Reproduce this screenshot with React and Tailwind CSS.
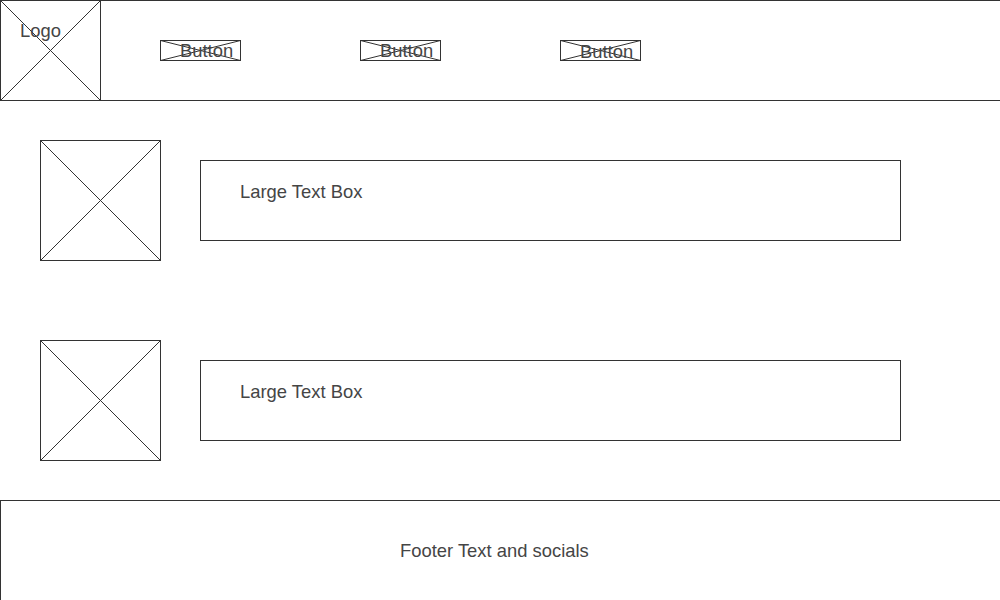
import React from "react";

function Cross({ w, h }) {
  // diagonal lines of a wireframe placeholder
  return (
    <svg
      className="pointer-events-none absolute -inset-px overflow-visible"
      width={w}
      height={h}
      viewBox={`0 0 ${w} ${h}`}
    >
      <line x1="0.5" y1="0.5" x2={w - 0.5} y2={h - 0.5} stroke="#333" strokeWidth="1" />
      <line x1={w - 0.5} y1="0.5" x2="0.5" y2={h - 0.5} stroke="#333" strokeWidth="1" />
    </svg>
  );
}

function NavButton({ className = "" }) {
  return (
    <div className={`relative flex h-[21px] w-[81px] shrink-0 items-center border border-[#333] pl-[19px] ${className}`}>
      <Cross w={81} h={21} />
      <span className="relative whitespace-nowrap leading-[21px]">Button</span>
    </div>
  );
}

function Row() {
  return (
    <div className="flex items-start pl-[40px]">
      <div className="relative h-[121px] w-[121px] shrink-0 border border-[#333]">
        <Cross w={121} h={121} />
      </div>
      <div className="ml-[39px] mt-[20px] h-[81px] w-[701px] shrink-0 border border-[#333] pl-[39px] pt-[20px]">
        <p className="leading-[21px]">Large Text Box</p>
      </div>
    </div>
  );
}

export default function App() {
  return (
    <div className="h-[600px] w-[1000px] overflow-hidden bg-white font-['Liberation_Sans',Arial,sans-serif] text-[18.4px] text-[#454545]">
      <header className="flex h-[101px] w-[1010px]">
        <div className="relative h-[101px] w-[101px] shrink-0 border border-[#333] pl-[19px] pt-[19px]">
          <Cross w={101} h={101} />
          <span className="relative block leading-[21px]">Logo</span>
        </div>
        <nav className="flex h-[101px] flex-1 items-start gap-[119px] border-y border-r border-[#333] pl-[59px] pt-[39px]">
          <NavButton />
          <NavButton />
          <NavButton className="pt-[2px]" />
        </nav>
      </header>

      <main className="flex flex-col pt-[39px]">
        <Row />
        <div className="h-[79px]" />
        <Row />
      </main>

      <footer className="mt-[39px] h-[101px] w-[1010px] border-l border-t border-[#333] pl-[399px] pt-[39px]">
        <p className="leading-[21px]">Footer Text and socials</p>
      </footer>
    </div>
  );
}
